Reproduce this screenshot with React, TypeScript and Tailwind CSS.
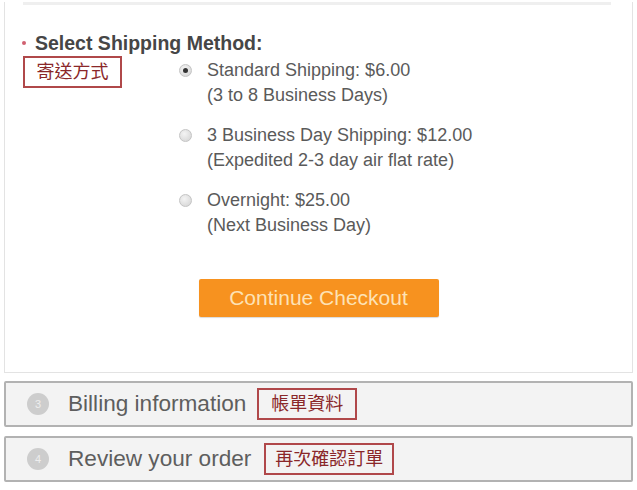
import React from 'react';

const font = { fontFamily: '"Liberation Sans", Arial, "Noto Sans CJK TC", sans-serif' };

/**
 * Annotation box (red outline with Chinese label)
 */
function Tag({ text, className }: { text: string; className?: string }) {
  return (
    <div
      className={
        'flex items-center justify-center border-2 border-[#b0484a] text-[18px] leading-none text-[#8a2729] ' +
        (className || '')
      }
    >
      {text}
    </div>
  );
}

interface OptionProps {
  title: string;
  note: string;
  checked?: boolean;
}

function ShippingOption({ title, note, checked }: OptionProps) {
  return (
    <div className="flex items-start">
      <div className="mt-[6px] flex h-[13px] w-[13px] shrink-0 items-center justify-center rounded-full border border-[#c4c4c4] bg-[radial-gradient(circle_at_40%_35%,#f4f4f4,#d2d2d2)]">
        {checked && <div className="h-[5px] w-[5px] rounded-full bg-[#333]"></div>}
      </div>
      <div className="ml-[15px] text-[18px] leading-[25px] text-[#5a5a5a]">
        <div>{title}</div>
        <div>{note}</div>
      </div>
    </div>
  );
}

function StepBar({ num, label, tag, tagClass }: { num: number; label: string; tag: string; tagClass: string }) {
  return (
    <div className="flex h-[46px] items-center rounded-[2px] border-2 border-[#b2b2b2] bg-[#f3f3f3]">
      <div className="ml-[21px] flex h-[22px] w-[22px] items-center justify-center rounded-full bg-[#cdcdcd] text-[11px] text-[#eee]">
        {num}
      </div>
      <div className="ml-[19px] text-[22.6px] leading-none text-[#5e5e5e]">{label}</div>
      <Tag text={tag} className={'h-[32px] ' + tagClass} />
    </div>
  );
}

export default function App() {
  return (
    <div className="h-[490px] w-[637px] overflow-hidden bg-white px-[4px]" style={font}>
      <div className="border border-t-0 border-[#e3e3e3] pb-[55px]">
        <div className="ml-[18px] mr-[21px] mt-[2px] h-[3px] bg-[#efefef]"></div>

        <div className="mt-[27px] flex items-center pl-[17px]">
          <span className="mr-[9px] h-[4px] w-[4px] rounded-full bg-[#d06070]"></span>
          <span className="text-[19.5px] font-bold leading-[22px] text-[#464646]">
            Select Shipping Method:
          </span>
        </div>

        <div className="mt-[2px] flex items-start pl-[18px]">
          <Tag text="寄送方式" className="h-[32px] w-[99px]" />
          <div className="ml-[57px] mt-[2px] flex flex-col gap-[15px]">
            <ShippingOption title="Standard Shipping: $6.00" note="(3 to 8 Business Days)" checked />
            <ShippingOption title="3 Business Day Shipping: $12.00" note="(Expedited 2-3 day air flat rate)" />
            <ShippingOption title="Overnight: $25.00" note="(Next Business Day)" />
          </div>
        </div>

        <div className="mt-[41px] flex justify-center">
          <button className="h-[38px] w-[240px] rounded-[2px] bg-[#f7921f] text-[21px] text-[#fde2b6] shadow-[0_1px_1px_rgba(0,0,0,0.15)]">
            Continue Checkout
          </button>
        </div>
      </div>

      <div className="mt-[8px] flex flex-col gap-[9px]">
        <StepBar num={3} label="Billing information" tag="帳單資料" tagClass="ml-[11px] w-[100px]" />
        <StepBar num={4} label="Review your order" tag="再次確認訂單" tagClass="ml-[13px] w-[130px]" />
      </div>
    </div>
  );
}
